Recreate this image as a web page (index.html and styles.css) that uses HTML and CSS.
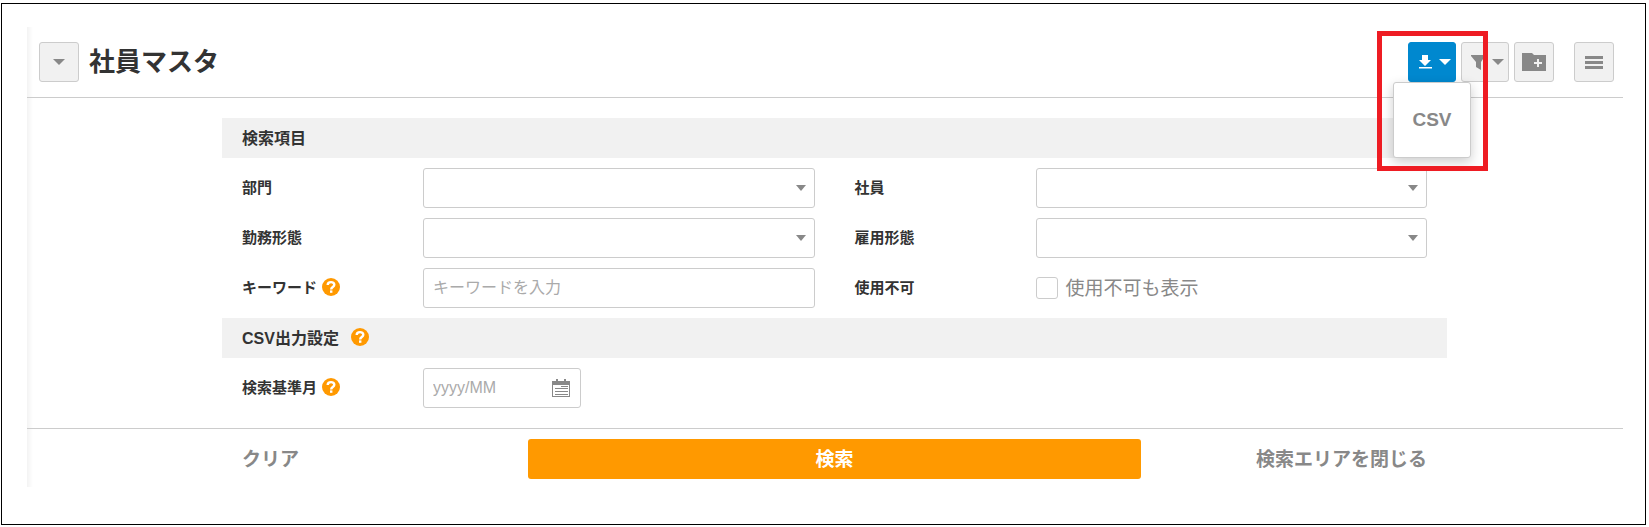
FILE: index.html
```html
<!DOCTYPE html>
<html lang="ja">
<head>
<meta charset="utf-8">
<meta name="viewport" content="width=device-width, initial-scale=1">
<title>社員マスタ</title>
<link rel="stylesheet" href="styles.css">
</head>
<body>
<svg class="symbols" aria-hidden="true">
  <symbol id="help" viewBox="0 0 18 18">
    <circle cx="9" cy="9" r="9" fill="#f90"/>
    <path d="M5.700 7C5.700 3.200 12.300 3.200 12.300 6.800C12.300 9 9.200 9 9.200 11.400" fill="none" stroke="#fff" stroke-width="2.400"/>
    <rect x="8" y="12.400" width="2.400" height="2.400" fill="#fff"/>
  </symbol>
</svg>
<div class="frame">
  <main class="panel">
    <header class="header">
      <button class="tool tool-square" type="button" aria-label="メニューを開く"><span class="caret caret-wide"></span></button>
      <h1 class="title">社員マスタ</h1>
      <div class="tools">
        <div class="export">
          <button class="tool tool-split tool-active" type="button" aria-label="ダウンロード">
            <svg class="glyph" width="14" height="16" viewBox="0 0 14 16"><path fill="currentColor" d="M4 1h6v5h3L7 12 1 6h3zM1 13h13v1.500H1z"/></svg>
            <span class="caret caret-wide"></span>
          </button>
          <div class="menu"><button class="menu-item" type="button">CSV</button></div>
          <div class="highlight"></div>
        </div>
        <button class="tool tool-split" type="button" aria-label="フィルター">
          <svg class="glyph" width="14" height="16" viewBox="0 0 14 16"><path fill="currentColor" d="M0 1h14v1L10 8v8L5 13V8L0 2z"/></svg>
          <span class="caret caret-wide"></span>
        </button>
        <button class="tool tool-square" type="button" aria-label="フォルダーに追加">
          <svg width="24" height="18" viewBox="0 0 24 18"><path fill="currentColor" d="M0 0h10l2 2h12v16H0z"/><path fill="#f1f1f1" d="M15 6h2v3h3v2h-3v3h-2v-3h-3V9h3z"/></svg>
        </button>
        <button class="tool tool-square tool-last" type="button" aria-label="メニュー">
          <svg width="18" height="13" viewBox="0 0 18 13"><path fill="currentColor" d="M0 0h18v3H0zM0 5h18v3H0zM0 10h18v3H0z"/></svg>
        </button>
      </div>
    </header>
    <form class="search">
      <div class="fields">
        <h2 class="section">検索項目</h2>
        <div class="grid">
          <div class="row"><label class="label" for="dept">部門</label><div class="select"><select class="control" id="dept"><option></option></select><span class="caret"></span></div></div>
          <div class="row"><label class="label" for="emp">社員</label><div class="select"><select class="control" id="emp"><option></option></select><span class="caret"></span></div></div>
          <div class="row"><label class="label" for="work">勤務形態</label><div class="select"><select class="control" id="work"><option></option></select><span class="caret"></span></div></div>
          <div class="row"><label class="label" for="hire">雇用形態</label><div class="select"><select class="control" id="hire"><option></option></select><span class="caret"></span></div></div>
          <div class="row"><label class="label" for="word">キーワード<svg class="help"><use href="#help"/></svg></label><input class="control" id="word" type="text" placeholder="キーワードを入力"></div>
          <div class="row"><span class="label">使用不可</span><label class="check"><input class="box" type="checkbox"><span class="check-text">使用不可も表示</span></label></div>
        </div>
        <h2 class="section">CSV出力設定<svg class="help help-section"><use href="#help"/></svg></h2>
        <div class="grid">
          <div class="row"><label class="label" for="month">検索基準月<svg class="help"><use href="#help"/></svg></label>
            <div class="date"><input class="control control-date" id="month" type="text" placeholder="yyyy/MM">
              <svg class="calendar" width="18" height="18" viewBox="0 0 18 18"><path fill="currentColor" d="M0 2h4V0h2v2h6V0h2v2h4v16H0zM1 6v11h16V6z" fill-rule="evenodd"/><path fill="currentColor" d="M9 7h7v1H9zM3 9h13v1H3zM3 12h13v1H3zM3 15h13v1H3z"/></svg>
            </div>
          </div>
        </div>
      </div>
      <div class="actions">
        <button class="action action-start" type="reset">クリア</button>
        <button class="action action-primary" type="button">検索</button>
        <button class="action action-end" type="button">検索エリアを閉じる</button>
      </div>
    </form>
  </main>
</div>
</body>
</html>
```
FILE: styles.css
```css
* {
  box-sizing: border-box;
}

body {
  margin: 0;
  padding: 3px 3px 2px 1px;
  background: #fff;
  color: #333;
  font-family: "Liberation Sans", "Noto Sans CJK JP", sans-serif;
  font-size: 15px;
}

button,
input,
select {
  margin: 0;
  font: inherit;
}

.symbols {
  position: absolute;
  width: 0;
  height: 0;
}

.frame {
  padding: 23px 22px 37px 25px;
  border: 1px solid #000;
}

.panel {
  background: linear-gradient(to right, #f3f3f3, #fff 6px);
}

.header {
  display: flex;
  align-items: center;
  height: 71px;
  padding: 0 9px 0 12px;
  border-bottom: 1px solid #ccc;
}

.title {
  margin: 0 auto 0 10px;
  font-size: 26px;
  line-height: 40px;
}

.tools {
  display: flex;
  gap: 5px;
}

.tool {
  display: flex;
  align-items: center;
  justify-content: center;
  height: 40px;
  padding: 0;
  border: 1px solid #ccc;
  border-radius: 3px;
  background: #f1f1f1;
  color: #888;
}

.tool-square {
  width: 40px;
}

.tool-split {
  gap: 7px;
  width: 48px;
  padding-left: 4px;
}

.tool-active {
  border-color: #0088cf;
  background: #0088cf;
  color: #fff;
}

.tool-last {
  margin-left: 15px;
}

.caret {
  border: 5px solid transparent;
  border-top: 6px solid #888;
  border-bottom: 0;
}

.caret-wide {
  border-width: 6px 6px 0;
  border-top-color: currentColor;
}

.export {
  position: relative;
}

.menu {
  position: absolute;
  z-index: 1;
  top: 40px;
  right: -15px;
  width: 78px;
  border: 1px solid #ccc;
  border-radius: 3px;
  background: #fff;
  box-shadow: 0 4px 12px rgba(0, 0, 0, 0.2);
}

.menu-item {
  width: 100%;
  height: 74px;
  padding: 0;
  border: 0;
  background: none;
  color: #888;
  font-size: 19px;
  font-weight: bold;
}

.highlight {
  position: absolute;
  z-index: 2;
  top: -11px;
  right: -32px;
  width: 111px;
  height: 140px;
  border: 5px solid #ee1c23;
  pointer-events: none;
}

.fields {
  padding: 20px 176px 20px 195px;
  border-bottom: 1px solid #ccc;
}

.section {
  display: flex;
  align-items: center;
  height: 40px;
  margin: 0;
  padding: 0 20px 2px;
  background: #f1f1f1;
  font-size: 16px;
}

.grid {
  display: grid;
  grid-template-columns: 1fr 1fr;
  gap: 10px 40px;
  padding: 10px 20px;
}

.fields > .grid:last-child {
  padding-bottom: 0;
}

.row {
  display: grid;
  grid-template-columns: 181px 1fr;
  align-items: center;
  min-height: 40px;
}

.label {
  display: flex;
  align-items: center;
  padding-bottom: 3px;
  font-weight: bold;
}

.help {
  width: 18px;
  height: 18px;
  margin-left: 5px;
}

.help-section {
  margin-left: 12px;
}

.control {
  appearance: none;
  width: 100%;
  height: 40px;
  padding: 0 9px;
  border: 1px solid #ccc;
  border-radius: 3px;
  background: #fff;
  color: #333;
  font-size: 16px;
}

.control::placeholder {
  color: #aaa;
  opacity: 1;
}

.select {
  display: grid;
  align-items: center;
}

.select > * {
  grid-area: 1 / 1;
}

.select .caret {
  justify-self: end;
  margin-right: 9px;
  pointer-events: none;
}

.check {
  display: flex;
  align-items: center;
  gap: 8px;
  color: #888;
  font-size: 19px;
}

.check-text {
  padding-bottom: 3px;
}

.box {
  appearance: none;
  width: 22px;
  height: 22px;
  border: 1px solid #ccc;
  border-radius: 3px;
  background: #fff;
}

.date {
  display: grid;
  align-items: center;
  width: 158px;
}

.date > * {
  grid-area: 1 / 1;
}

.calendar {
  justify-self: end;
  margin-right: 11px;
  color: #888;
}

.actions {
  display: grid;
  grid-template-columns: 1fr 2fr 1fr;
  padding: 10px 176px 8px 195px;
}

.action {
  height: 40px;
  padding: 0 20px 4px;
  border: 0;
  border-radius: 3px;
  background: none;
  color: #888;
  font-size: 19px;
  font-weight: bold;
}

.action-start {
  text-align: left;
}

.action-end {
  text-align: right;
}

.action-primary {
  background: #f90;
  color: #fff;
}
```
